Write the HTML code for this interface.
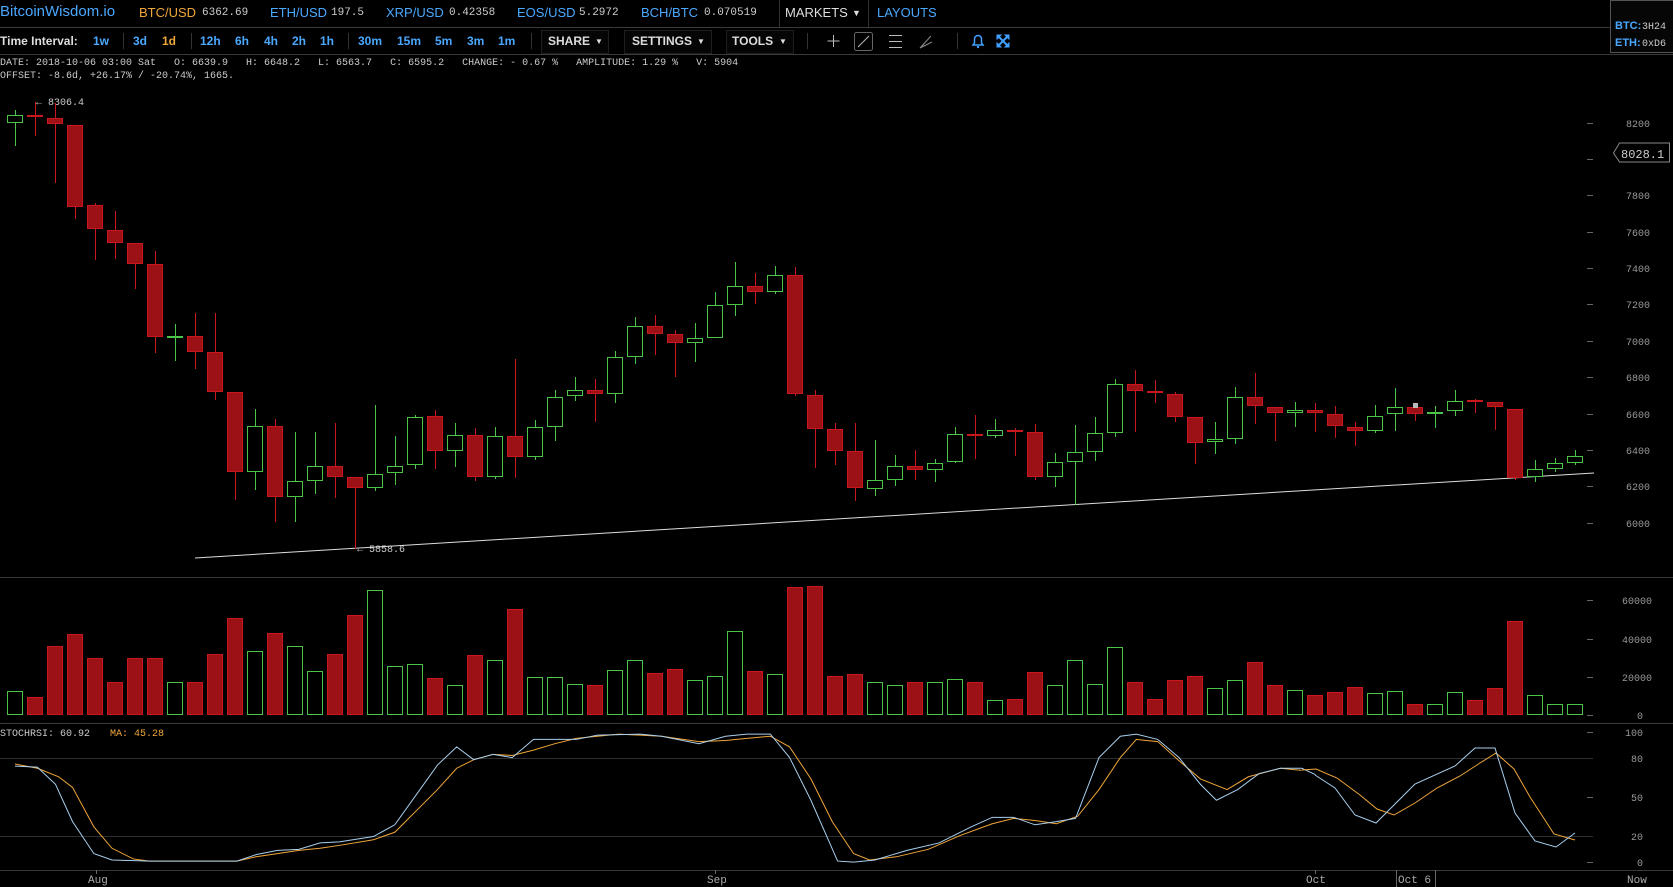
<!DOCTYPE html>
<html><head><meta charset="utf-8">
<style>
html,body{margin:0;padding:0;background:#000;}
body{width:1673px;height:887px;overflow:hidden;position:relative;font-family:"Liberation Sans",sans-serif;}
.a{position:absolute;white-space:nowrap;line-height:16px;}
.h{top:5px;font-size:13px;}
.m{font-family:"Liberation Mono",monospace;font-size:11px;color:#ccc;}
.b{color:#4aa8ff}.o{color:#f0a63a}.w{color:#ddd}
.t{top:33px;font-size:12px;font-weight:bold;}
.sep{position:absolute;width:1px;background:#333;}
pre{position:absolute;left:0;top:57px;margin:0;font-family:"Liberation Mono",monospace;font-size:10px;line-height:13px;color:#ccc;}
.box{position:absolute;top:30px;height:22px;border:1px solid #1e1e1e;background:#050505;}
.r{fill:#9b1116;stroke:#c8171d}.g{fill:#000;stroke:#4cc447}
.rl{stroke:#c8171d}.gl{stroke:#4cc447}
svg text{font-family:"Liberation Mono",monospace;}
</style></head><body>

<span class="a b" style="left:0;top:4px;font-size:15px;">BitcoinWisdom.io</span>
<span class="a h o" style="left:139px">BTC/USD</span><span class="a h m" style="left:202px;top:5px">6362.69</span>
<span class="a h b" style="left:270px">ETH/USD</span><span class="a h m" style="left:331px;top:5px">197.5</span>
<span class="a h b" style="left:386px">XRP/USD</span><span class="a h m" style="left:449px;top:5px">0.42358</span>
<span class="a h b" style="left:517px">EOS/USD</span><span class="a h m" style="left:579px;top:5px">5.2972</span>
<span class="a h b" style="left:641px">BCH/BTC</span><span class="a h m" style="left:704px;top:5px">0.070519</span>
<div class="sep" style="left:779px;top:0;height:27px"></div>
<span class="a h w" style="left:785px">MARKETS</span><span class="a w" style="left:852px;top:5px;font-size:9px">▼</span>
<div class="sep" style="left:868px;top:0;height:27px"></div>
<span class="a h b" style="left:877px">LAYOUTS</span>

<span class="a t w" style="left:0">Time Interval:</span>
<span class="a t b" style="left:93px">1w</span>
<div class="sep" style="left:123px;top:33px;height:16px"></div>
<span class="a t b" style="left:133px">3d</span>
<span class="a t o" style="left:162px">1d</span>
<div class="sep" style="left:191px;top:33px;height:16px"></div>
<span class="a t b" style="left:200px">12h</span>
<span class="a t b" style="left:235px">6h</span>
<span class="a t b" style="left:264px">4h</span>
<span class="a t b" style="left:292px">2h</span>
<span class="a t b" style="left:320px">1h</span>
<div class="sep" style="left:348px;top:33px;height:16px"></div>
<span class="a t b" style="left:358px">30m</span>
<span class="a t b" style="left:397px">15m</span>
<span class="a t b" style="left:435px">5m</span>
<span class="a t b" style="left:467px">3m</span>
<span class="a t b" style="left:498px">1m</span>
<div class="sep" style="left:531px;top:33px;height:16px"></div>
<div class="box" style="left:541px;width:66px"></div>
<span class="a t w" style="left:548px">SHARE</span><span class="a w" style="left:595px;top:34px;font-size:8px">▼</span>
<div class="box" style="left:624px;width:86px"></div>
<span class="a t w" style="left:632px">SETTINGS</span><span class="a w" style="left:697px;top:34px;font-size:8px">▼</span>
<div class="box" style="left:726px;width:66px"></div>
<span class="a t w" style="left:732px">TOOLS</span><span class="a w" style="left:779px;top:34px;font-size:8px">▼</span>
<div class="sep" style="left:807px;top:33px;height:16px"></div>
<div class="sep" style="left:957px;top:33px;height:16px"></div>

<pre>DATE: 2018-10-06 03:00 Sat   O: 6639.9   H: 6648.2   L: 6563.7   C: 6595.2   CHANGE: - 0.67 %   AMPLITUDE: 1.29 %   V: 5904
OFFSET: -8.6d, +26.17% / -20.74%, 1665.</pre>

<svg width="1673" height="887" style="position:absolute;left:0;top:0" xmlns="http://www.w3.org/2000/svg">
<g stroke="#bbb" stroke-width="1" fill="none">
<path d="M833.5 35v12M827.5 41h12"/>
<rect x="854.5" y="32.5" width="18" height="18" rx="2" stroke="#666"/>
<path d="M858 47l11-11"/>
<path d="M889 35.5h13M889 41.5h13M889 47.5h13"/>
<path d="M920 48l11-12M920 48l12-6M920 48l4-4" stroke="#888"/>
</g>
<g stroke="#3fa0ff" fill="#3fa0ff">
<path d="M973 45h10l-1.5-2v-4a3.5 3.5 0 0 0-7 0v4z" fill="none" stroke-width="1.5"/>
<circle cx="978" cy="47" r="1.2" stroke="none"/>
<path d="M997 35l4 0-4 4zM1009 35l-4 0 4 4zM997 47l4 0-4-4zM1009 47l-4 0 4-4z" stroke-width="1"/>
<path d="M998 36l10 10M1008 36l-10 10" stroke-width="2"/>
</g>

<g stroke="#3a3a3a" stroke-width="1">
<line x1="0" y1="27.5" x2="1673" y2="27.5"/>
<line x1="0" y1="54.5" x2="1673" y2="54.5"/>
<line x1="0" y1="577.5" x2="1673" y2="577.5"/>
<line x1="0" y1="723.5" x2="1673" y2="723.5"/>
<line x1="0" y1="870.5" x2="1673" y2="870.5"/>
</g>
<g stroke="#2e2e2e"><line x1="0" y1="758.5" x2="1593" y2="758.5"/><line x1="0" y1="836.5" x2="1593" y2="836.5"/></g>

<rect x="1610.5" y="0.5" width="63" height="52" fill="#060606" stroke="#555"/>
<text x="1615" y="29" font-size="11" font-weight="bold" fill="#4aa8ff" style="font-family:'Liberation Sans',sans-serif">BTC:</text>
<text x="1642" y="29" font-size="10" fill="#ccc">3H24</text>
<text x="1615" y="46" font-size="11" font-weight="bold" fill="#4aa8ff" style="font-family:'Liberation Sans',sans-serif">ETH:</text>
<text x="1642" y="46" font-size="10" fill="#ccc">0xD6</text>

<g stroke="#666">
<path d="M1587 123.5h6M1587 159.5h6M1587 195.5h6M1587 232.5h6M1587 268.5h6M1587 304.5h6M1587 341.5h6M1587 377.5h6M1587 414.5h6M1587 450.5h6M1587 486.5h6M1587 523.5h6"/>
<path d="M1587 600.5h6M1587 639.5h6M1587 677.5h6M1587 715.5h6"/>
<path d="M1587 732.5h6M1587 797.5h6M1587 862.5h6"/>
<path d="M96.5 870v4M715.5 870v4M1315.5 870v4M1396.5 870v17M1435.5 870v17"/>
</g>
<g font-size="10" fill="#999" text-anchor="end">
<text x="1650" y="127">8200</text>
<text x="1650" y="199">7800</text><text x="1650" y="236">7600</text><text x="1650" y="272">7400</text>
<text x="1650" y="308">7200</text><text x="1650" y="345">7000</text><text x="1650" y="381">6800</text>
<text x="1650" y="418">6600</text><text x="1650" y="454">6400</text><text x="1650" y="490">6200</text>
<text x="1650" y="527">6000</text>
<text x="1652" y="604">60000</text><text x="1652" y="643">40000</text><text x="1652" y="681">20000</text><text x="1643" y="719">0</text>
<text x="1643" y="736">100</text><text x="1643" y="762">80</text><text x="1643" y="801">50</text><text x="1643" y="840">20</text><text x="1643" y="866">0</text>
</g>
<path d="M1613.5 153l6-10h50v19h-50z" fill="#000" stroke="#888"/>
<text x="1621" y="158" font-size="12" fill="#ccc">8028.1</text>
<g font-size="11" fill="#aaa">
<text x="88" y="883">Aug</text><text x="707" y="883">Sep</text><text x="1306" y="883">Oct</text>
<text x="1398" y="883">Oct 6</text><text x="1627" y="883">Now</text>
</g>
<text x="36" y="105" font-size="10" fill="#ccc">← 8306.4</text>
<text x="357" y="552" font-size="10" fill="#ccc">← 5858.6</text>
<text x="0" y="736" font-size="10" fill="#ccc">STOCHRSI: 60.92</text>
<text x="110" y="736" font-size="10" fill="#f0a63a">MA: 45.28</text>

<line x1="195" y1="558" x2="1594" y2="473" stroke="#ddd" stroke-width="1"/>

<g stroke-width="1">
<line class="gl" x1="15.5" y1="110" x2="15.5" y2="146"/><rect class="g" x="7.5" y="115.5" width="15" height="7"/>
<line class="rl" x1="35.5" y1="102" x2="35.5" y2="136"/><rect class="r" x="27.5" y="115.5" width="15" height="1"/>
<line class="rl" x1="55.5" y1="103" x2="55.5" y2="183"/><rect class="r" x="47.5" y="118.5" width="15" height="5"/>
<line class="rl" x1="75.5" y1="125" x2="75.5" y2="219"/><rect class="r" x="67.5" y="125.5" width="15" height="81"/>
<line class="rl" x1="95.5" y1="203" x2="95.5" y2="260"/><rect class="r" x="87.5" y="205.5" width="15" height="23"/>
<line class="rl" x1="115.5" y1="211" x2="115.5" y2="259"/><rect class="r" x="107.5" y="230.5" width="15" height="12"/>
<line class="rl" x1="135.5" y1="243" x2="135.5" y2="289"/><rect class="r" x="127.5" y="243.5" width="15" height="20"/>
<line class="rl" x1="155.5" y1="251" x2="155.5" y2="353"/><rect class="r" x="147.5" y="264.5" width="15" height="72"/>
<line class="gl" x1="175.5" y1="324" x2="175.5" y2="361"/><rect class="g" x="167.5" y="336.5" width="15" height="1"/>
<line class="rl" x1="195.5" y1="313" x2="195.5" y2="369"/><rect class="r" x="187.5" y="336.5" width="15" height="15"/>
<line class="rl" x1="215.5" y1="313" x2="215.5" y2="400"/><rect class="r" x="207.5" y="352.5" width="15" height="39"/>
<line class="rl" x1="235.5" y1="392" x2="235.5" y2="500"/><rect class="r" x="227.5" y="392.5" width="15" height="79"/>
<line class="gl" x1="255.5" y1="409" x2="255.5" y2="490"/><rect class="g" x="247.5" y="426.5" width="15" height="45"/>
<line class="rl" x1="275.5" y1="419" x2="275.5" y2="522"/><rect class="r" x="267.5" y="426.5" width="15" height="70"/>
<line class="gl" x1="295.5" y1="432" x2="295.5" y2="522"/><rect class="g" x="287.5" y="481.5" width="15" height="15"/>
<line class="gl" x1="315.5" y1="432" x2="315.5" y2="494"/><rect class="g" x="307.5" y="466.5" width="15" height="14"/>
<line class="rl" x1="335.5" y1="423" x2="335.5" y2="498"/><rect class="r" x="327.5" y="466.5" width="15" height="10"/>
<line class="rl" x1="355.5" y1="477" x2="355.5" y2="549"/><rect class="r" x="347.5" y="477.5" width="15" height="10"/>
<line class="gl" x1="375.5" y1="405" x2="375.5" y2="491"/><rect class="g" x="367.5" y="474.5" width="15" height="13"/>
<line class="gl" x1="395.5" y1="436" x2="395.5" y2="485"/><rect class="g" x="387.5" y="466.5" width="15" height="6"/>
<line class="gl" x1="415.5" y1="415" x2="415.5" y2="469"/><rect class="g" x="407.5" y="417.5" width="15" height="47"/>
<line class="rl" x1="435.5" y1="410" x2="435.5" y2="469"/><rect class="r" x="427.5" y="416.5" width="15" height="34"/>
<line class="gl" x1="455.5" y1="423" x2="455.5" y2="467"/><rect class="g" x="447.5" y="435.5" width="15" height="15"/>
<line class="rl" x1="475.5" y1="428" x2="475.5" y2="481"/><rect class="r" x="467.5" y="435.5" width="15" height="41"/>
<line class="gl" x1="495.5" y1="427" x2="495.5" y2="479"/><rect class="g" x="487.5" y="436.5" width="15" height="40"/>
<line class="rl" x1="515.5" y1="359" x2="515.5" y2="478"/><rect class="r" x="507.5" y="436.5" width="15" height="20"/>
<line class="gl" x1="535.5" y1="420" x2="535.5" y2="460"/><rect class="g" x="527.5" y="427.5" width="15" height="29"/>
<line class="gl" x1="555.5" y1="390" x2="555.5" y2="441"/><rect class="g" x="547.5" y="397.5" width="15" height="29"/>
<line class="gl" x1="575.5" y1="377" x2="575.5" y2="401"/><rect class="g" x="567.5" y="390.5" width="15" height="5"/>
<line class="rl" x1="595.5" y1="379" x2="595.5" y2="422"/><rect class="r" x="587.5" y="390.5" width="15" height="3"/>
<line class="gl" x1="615.5" y1="351" x2="615.5" y2="403"/><rect class="g" x="607.5" y="357.5" width="15" height="36"/>
<line class="gl" x1="635.5" y1="317" x2="635.5" y2="364"/><rect class="g" x="627.5" y="326.5" width="15" height="30"/>
<line class="rl" x1="655.5" y1="315" x2="655.5" y2="355"/><rect class="r" x="647.5" y="326.5" width="15" height="7"/>
<line class="rl" x1="675.5" y1="330" x2="675.5" y2="377"/><rect class="r" x="667.5" y="334.5" width="15" height="8"/>
<line class="gl" x1="695.5" y1="323" x2="695.5" y2="362"/><rect class="g" x="687.5" y="338.5" width="15" height="4"/>
<line class="gl" x1="715.5" y1="292" x2="715.5" y2="338"/><rect class="g" x="707.5" y="305.5" width="15" height="32"/>
<line class="gl" x1="735.5" y1="262" x2="735.5" y2="316"/><rect class="g" x="727.5" y="286.5" width="15" height="18"/>
<line class="rl" x1="755.5" y1="273" x2="755.5" y2="304"/><rect class="r" x="747.5" y="286.5" width="15" height="5"/>
<line class="gl" x1="775.5" y1="266" x2="775.5" y2="294"/><rect class="g" x="767.5" y="275.5" width="15" height="16"/>
<line class="rl" x1="795.5" y1="267" x2="795.5" y2="396"/><rect class="r" x="787.5" y="275.5" width="15" height="118"/>
<line class="rl" x1="815.5" y1="390" x2="815.5" y2="468"/><rect class="r" x="807.5" y="395.5" width="15" height="33"/>
<line class="rl" x1="835.5" y1="423" x2="835.5" y2="465"/><rect class="r" x="827.5" y="429.5" width="15" height="21"/>
<line class="rl" x1="855.5" y1="423" x2="855.5" y2="501"/><rect class="r" x="847.5" y="451.5" width="15" height="36"/>
<line class="gl" x1="875.5" y1="440" x2="875.5" y2="496"/><rect class="g" x="867.5" y="480.5" width="15" height="8"/>
<line class="gl" x1="895.5" y1="455" x2="895.5" y2="486"/><rect class="g" x="887.5" y="466.5" width="15" height="13"/>
<line class="rl" x1="915.5" y1="450" x2="915.5" y2="480"/><rect class="r" x="907.5" y="466.5" width="15" height="3"/>
<line class="gl" x1="935.5" y1="459" x2="935.5" y2="482"/><rect class="g" x="927.5" y="463.5" width="15" height="6"/>
<line class="gl" x1="955.5" y1="427" x2="955.5" y2="463"/><rect class="g" x="947.5" y="434.5" width="15" height="27"/>
<line class="rl" x1="975.5" y1="415" x2="975.5" y2="459"/><rect class="r" x="967.5" y="434.5" width="15" height="1"/>
<line class="gl" x1="995.5" y1="419" x2="995.5" y2="438"/><rect class="g" x="987.5" y="430.5" width="15" height="5"/>
<line class="rl" x1="1015.5" y1="428" x2="1015.5" y2="456"/><rect class="r" x="1007.5" y="430.5" width="15" height="1"/>
<line class="rl" x1="1035.5" y1="424" x2="1035.5" y2="480"/><rect class="r" x="1027.5" y="432.5" width="15" height="44"/>
<line class="gl" x1="1055.5" y1="453" x2="1055.5" y2="487"/><rect class="g" x="1047.5" y="462.5" width="15" height="14"/>
<line class="gl" x1="1075.5" y1="425" x2="1075.5" y2="505"/><rect class="g" x="1067.5" y="452.5" width="15" height="9"/>
<line class="gl" x1="1095.5" y1="417" x2="1095.5" y2="461"/><rect class="g" x="1087.5" y="433.5" width="15" height="18"/>
<line class="gl" x1="1115.5" y1="379" x2="1115.5" y2="437"/><rect class="g" x="1107.5" y="384.5" width="15" height="48"/>
<line class="rl" x1="1135.5" y1="370" x2="1135.5" y2="432"/><rect class="r" x="1127.5" y="384.5" width="15" height="6"/>
<line class="rl" x1="1155.5" y1="380" x2="1155.5" y2="403"/><rect class="r" x="1147.5" y="391.5" width="15" height="1"/>
<line class="rl" x1="1175.5" y1="392" x2="1175.5" y2="422"/><rect class="r" x="1167.5" y="394.5" width="15" height="22"/>
<line class="rl" x1="1195.5" y1="417" x2="1195.5" y2="464"/><rect class="r" x="1187.5" y="417.5" width="15" height="25"/>
<line class="gl" x1="1215.5" y1="422" x2="1215.5" y2="454"/><rect class="g" x="1207.5" y="439.5" width="15" height="2"/>
<line class="gl" x1="1235.5" y1="387" x2="1235.5" y2="444"/><rect class="g" x="1227.5" y="397.5" width="15" height="41"/>
<line class="rl" x1="1255.5" y1="373" x2="1255.5" y2="424"/><rect class="r" x="1247.5" y="397.5" width="15" height="8"/>
<line class="rl" x1="1275.5" y1="407" x2="1275.5" y2="441"/><rect class="r" x="1267.5" y="407.5" width="15" height="5"/>
<line class="gl" x1="1295.5" y1="402" x2="1295.5" y2="427"/><rect class="g" x="1287.5" y="410.5" width="15" height="2"/>
<line class="rl" x1="1315.5" y1="403" x2="1315.5" y2="432"/><rect class="r" x="1307.5" y="410.5" width="15" height="2"/>
<line class="rl" x1="1335.5" y1="406" x2="1335.5" y2="438"/><rect class="r" x="1327.5" y="414.5" width="15" height="11"/>
<line class="rl" x1="1355.5" y1="422" x2="1355.5" y2="446"/><rect class="r" x="1347.5" y="427.5" width="15" height="3"/>
<line class="gl" x1="1375.5" y1="405" x2="1375.5" y2="433"/><rect class="g" x="1367.5" y="416.5" width="15" height="14"/>
<line class="gl" x1="1395.5" y1="388" x2="1395.5" y2="431"/><rect class="g" x="1387.5" y="407.5" width="15" height="6"/>
<line class="rl" x1="1415.5" y1="407" x2="1415.5" y2="421"/><rect class="r" x="1407.5" y="407.5" width="15" height="6"/>
<rect x="1413" y="403" width="5" height="5" fill="#bbb"/>
<line class="gl" x1="1435.5" y1="406" x2="1435.5" y2="428"/><rect class="g" x="1427.5" y="412.5" width="15" height="1"/>
<line class="gl" x1="1455.5" y1="390" x2="1455.5" y2="416"/><rect class="g" x="1447.5" y="401.5" width="15" height="9"/>
<line class="rl" x1="1475.5" y1="399" x2="1475.5" y2="413"/><rect class="r" x="1467.5" y="400.5" width="15" height="1"/>
<line class="rl" x1="1495.5" y1="402" x2="1495.5" y2="430"/><rect class="r" x="1487.5" y="402.5" width="15" height="4"/>
<line class="rl" x1="1515.5" y1="409" x2="1515.5" y2="480"/><rect class="r" x="1507.5" y="409.5" width="15" height="68"/>
<line class="gl" x1="1535.5" y1="460" x2="1535.5" y2="482"/><rect class="g" x="1527.5" y="469.5" width="15" height="7"/>
<line class="gl" x1="1555.5" y1="458" x2="1555.5" y2="472"/><rect class="g" x="1547.5" y="463.5" width="15" height="5"/>
<line class="gl" x1="1575.5" y1="450" x2="1575.5" y2="465"/><rect class="g" x="1567.5" y="456.5" width="15" height="6"/>
</g>

<g>
<rect class="g" x="7.5" y="691.5" width="15" height="23"/>
<rect class="r" x="27.5" y="697.5" width="15" height="17"/>
<rect class="r" x="47.5" y="646.5" width="15" height="68"/>
<rect class="r" x="67.5" y="634.5" width="15" height="80"/>
<rect class="r" x="87.5" y="658.5" width="15" height="56"/>
<rect class="r" x="107.5" y="682.5" width="15" height="32"/>
<rect class="r" x="127.5" y="658.5" width="15" height="56"/>
<rect class="r" x="147.5" y="658.5" width="15" height="56"/>
<rect class="g" x="167.5" y="682.5" width="15" height="32"/>
<rect class="r" x="187.5" y="682.5" width="15" height="32"/>
<rect class="r" x="207.5" y="654.5" width="15" height="60"/>
<rect class="r" x="227.5" y="618.5" width="15" height="96"/>
<rect class="g" x="247.5" y="651.5" width="15" height="63"/>
<rect class="r" x="267.5" y="633.5" width="15" height="81"/>
<rect class="g" x="287.5" y="646.5" width="15" height="68"/>
<rect class="g" x="307.5" y="671.5" width="15" height="43"/>
<rect class="r" x="327.5" y="654.5" width="15" height="60"/>
<rect class="r" x="347.5" y="615.5" width="15" height="99"/>
<rect class="g" x="367.5" y="590.5" width="15" height="124"/>
<rect class="g" x="387.5" y="666.5" width="15" height="48"/>
<rect class="g" x="407.5" y="664.5" width="15" height="50"/>
<rect class="r" x="427.5" y="678.5" width="15" height="36"/>
<rect class="g" x="447.5" y="685.5" width="15" height="29"/>
<rect class="r" x="467.5" y="655.5" width="15" height="59"/>
<rect class="g" x="487.5" y="660.5" width="15" height="54"/>
<rect class="r" x="507.5" y="609.5" width="15" height="105"/>
<rect class="g" x="527.5" y="677.5" width="15" height="37"/>
<rect class="g" x="547.5" y="677.5" width="15" height="37"/>
<rect class="g" x="567.5" y="684.5" width="15" height="30"/>
<rect class="r" x="587.5" y="685.5" width="15" height="29"/>
<rect class="g" x="607.5" y="670.5" width="15" height="44"/>
<rect class="g" x="627.5" y="660.5" width="15" height="54"/>
<rect class="r" x="647.5" y="673.5" width="15" height="41"/>
<rect class="r" x="667.5" y="669.5" width="15" height="45"/>
<rect class="g" x="687.5" y="680.5" width="15" height="34"/>
<rect class="g" x="707.5" y="676.5" width="15" height="38"/>
<rect class="g" x="727.5" y="631.5" width="15" height="83"/>
<rect class="r" x="747.5" y="671.5" width="15" height="43"/>
<rect class="g" x="767.5" y="674.5" width="15" height="40"/>
<rect class="r" x="787.5" y="587.5" width="15" height="127"/>
<rect class="r" x="807.5" y="586.5" width="15" height="128"/>
<rect class="r" x="827.5" y="676.5" width="15" height="38"/>
<rect class="r" x="847.5" y="674.5" width="15" height="40"/>
<rect class="g" x="867.5" y="682.5" width="15" height="32"/>
<rect class="g" x="887.5" y="685.5" width="15" height="29"/>
<rect class="r" x="907.5" y="682.5" width="15" height="32"/>
<rect class="g" x="927.5" y="682.5" width="15" height="32"/>
<rect class="g" x="947.5" y="679.5" width="15" height="35"/>
<rect class="r" x="967.5" y="682.5" width="15" height="32"/>
<rect class="g" x="987.5" y="700.5" width="15" height="14"/>
<rect class="r" x="1007.5" y="699.5" width="15" height="15"/>
<rect class="r" x="1027.5" y="672.5" width="15" height="42"/>
<rect class="g" x="1047.5" y="685.5" width="15" height="29"/>
<rect class="g" x="1067.5" y="660.5" width="15" height="54"/>
<rect class="g" x="1087.5" y="684.5" width="15" height="30"/>
<rect class="g" x="1107.5" y="647.5" width="15" height="67"/>
<rect class="r" x="1127.5" y="682.5" width="15" height="32"/>
<rect class="r" x="1147.5" y="699.5" width="15" height="15"/>
<rect class="r" x="1167.5" y="680.5" width="15" height="34"/>
<rect class="r" x="1187.5" y="676.5" width="15" height="38"/>
<rect class="g" x="1207.5" y="688.5" width="15" height="26"/>
<rect class="g" x="1227.5" y="680.5" width="15" height="34"/>
<rect class="r" x="1247.5" y="662.5" width="15" height="52"/>
<rect class="r" x="1267.5" y="685.5" width="15" height="29"/>
<rect class="g" x="1287.5" y="690.5" width="15" height="24"/>
<rect class="r" x="1307.5" y="695.5" width="15" height="19"/>
<rect class="r" x="1327.5" y="692.5" width="15" height="22"/>
<rect class="r" x="1347.5" y="687.5" width="15" height="27"/>
<rect class="g" x="1367.5" y="693.5" width="15" height="21"/>
<rect class="g" x="1387.5" y="691.5" width="15" height="23"/>
<rect class="r" x="1407.5" y="704.5" width="15" height="10"/>
<rect class="g" x="1427.5" y="704.5" width="15" height="10"/>
<rect class="g" x="1447.5" y="692.5" width="15" height="22"/>
<rect class="r" x="1467.5" y="700.5" width="15" height="14"/>
<rect class="r" x="1487.5" y="688.5" width="15" height="26"/>
<rect class="r" x="1507.5" y="621.5" width="15" height="93"/>
<rect class="g" x="1527.5" y="695.5" width="15" height="19"/>
<rect class="g" x="1547.5" y="704.5" width="15" height="10"/>
<rect class="g" x="1567.5" y="704.5" width="15" height="10"/>
</g>

<g fill="none" stroke-width="1">
<g transform="scale(1.067)">
<polyline vector-effect="non-scaling-stroke" stroke="#f0a63a" points="14,716 35,720 55,728 68,738 88,775 105,795 125,805 140,807 222,807 240,803 260,800 280,797 300,795 320,792 350,787 370,780 390,760 410,740 428,720 444,712 462,707 480,708 500,703 520,697 540,692 580,688 620,690 655,695 680,694 700,692 722,690 740,700 760,730 780,770 800,800 815,806 840,803 870,796 900,783 930,772 950,767 970,769 990,772 1010,765 1030,740 1050,710 1065,693 1085,695 1105,713 1125,730 1150,740 1170,728 1200,720 1220,722"/>
<polyline vector-effect="non-scaling-stroke" stroke="#a8cfee" points="14,718 35,719 52,735 68,770 88,800 105,806 140,807 222,807 240,801 260,797 280,796 300,790 318,789 350,784 370,773 390,745 410,717 428,700 444,712 462,707 480,710 500,693 540,693 560,689 600,688 620,690 655,697 680,690 700,688 722,688 740,710 760,750 785,807 800,808 820,806 850,797 880,790 910,775 930,766 950,766 970,773 990,770 1008,767 1030,710 1050,690 1065,688 1085,693 1105,710 1125,735 1140,750 1160,740 1180,725 1200,720 1220,720 1233,726"/>
</g>
<polyline stroke="#f0a63a" points="1302,770 1316,769 1337,778 1360,795 1377,809 1394,815 1415,803 1437,788 1460,776 1480,763 1496,753 1514,769 1530,797 1554,834 1575,840"/>
<polyline stroke="#a8cfee" points="1315,775 1335,788 1355,815 1376,823 1395,804 1415,784 1455,766 1475,748 1495,748 1515,813 1535,841 1556,847 1575,833"/>
</g>
</svg>
</body></html>
